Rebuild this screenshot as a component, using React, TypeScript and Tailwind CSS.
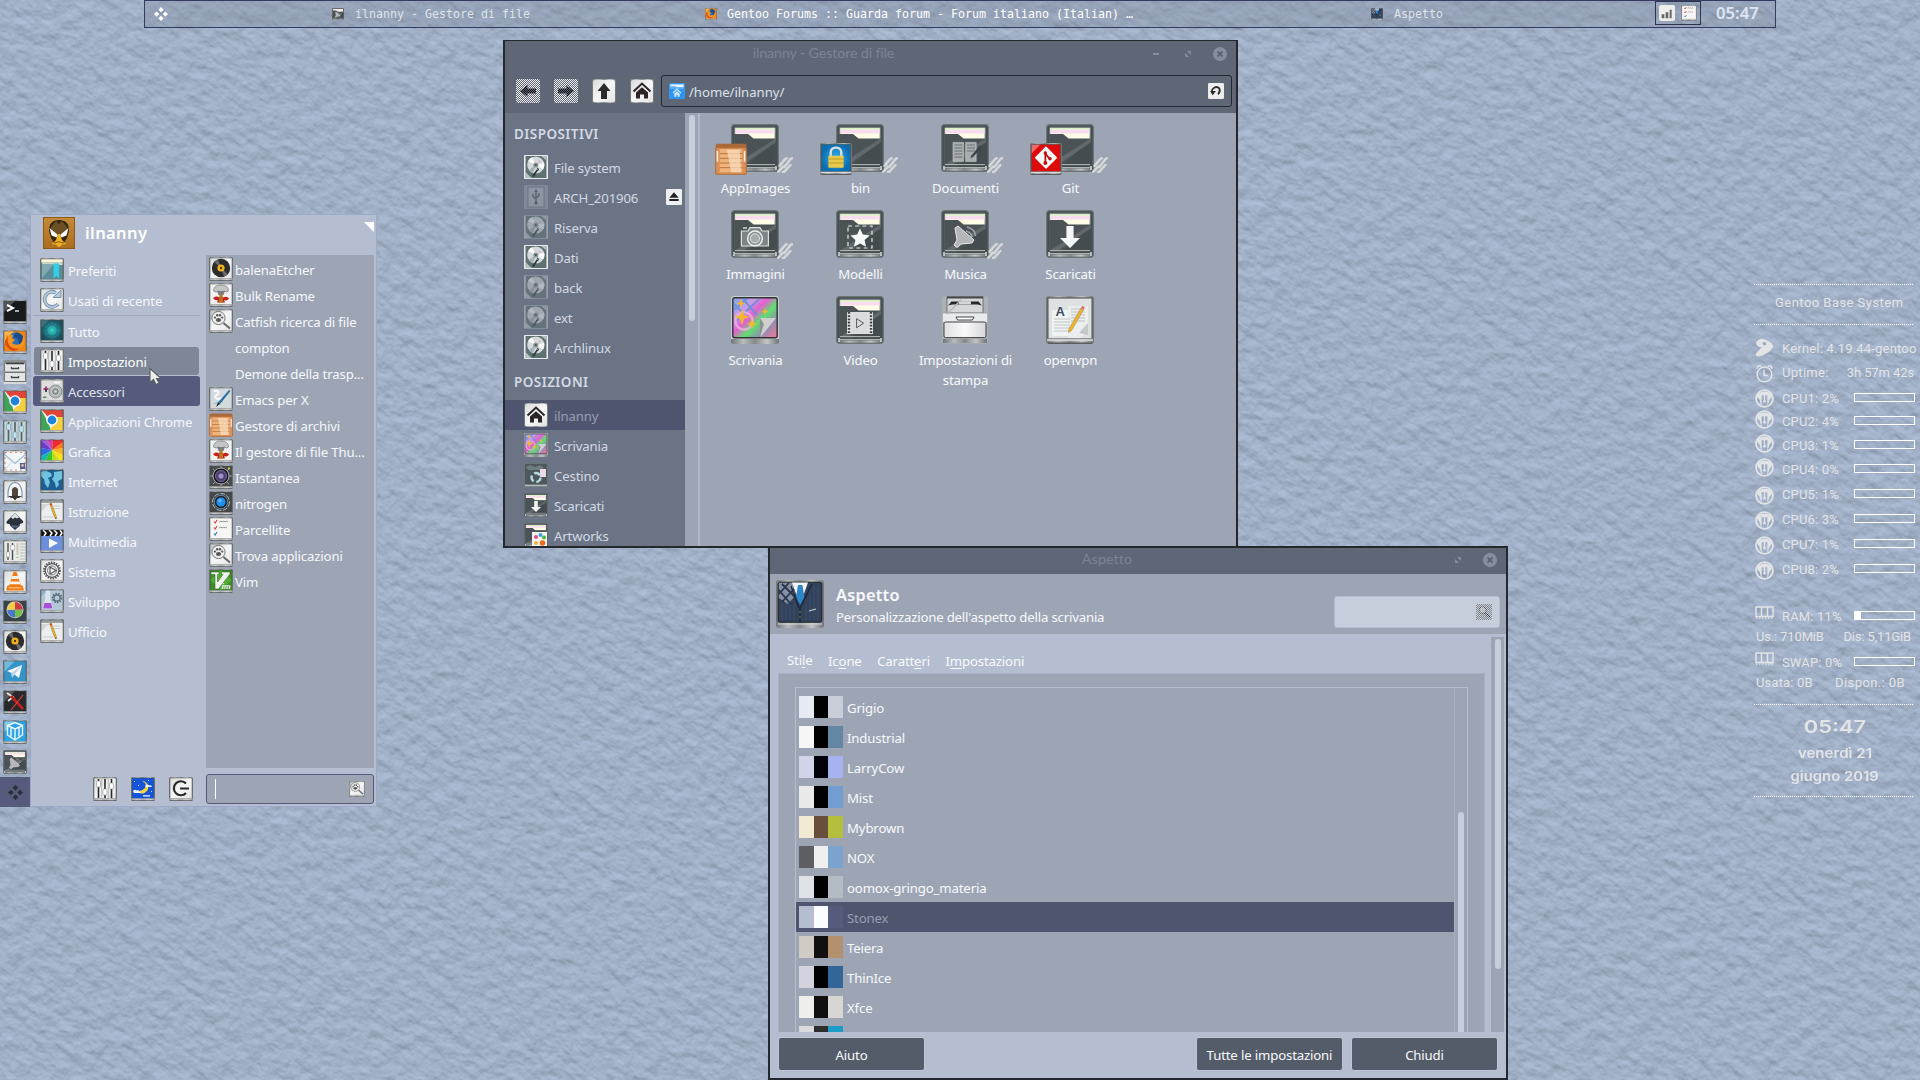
import React from "react";

/* ---------- icon drawings ---------- */

type Kids = { children?: React.ReactNode };

function Defs() {
  return (
    <svg width="0" height="0" className="absolute">
      <defs>
        <linearGradient id="metal" x1="0" y1="0" x2="1" y2="0">
          <stop offset="0" stopColor="#6f7476" />
          <stop offset="0.25" stopColor="#b9bcbd" />
          <stop offset="0.5" stopColor="#85898a" />
          <stop offset="0.75" stopColor="#c3c5c6" />
          <stop offset="1" stopColor="#6f7476" />
        </linearGradient>
        <linearGradient id="paper" x1="0" y1="0" x2="1" y2="1">
          <stop offset="0" stopColor="#d9dbdb" />
          <stop offset="0.5" stopColor="#f6f6f6" />
          <stop offset="1" stopColor="#e4e4e4" />
        </linearGradient>
        <linearGradient id="rainbow" x1="0" y1="0" x2="1" y2="0.9">
          <stop offset="0" stopColor="#7fa8e0" />
          <stop offset="0.28" stopColor="#c99be8" />
          <stop offset="0.45" stopColor="#e45fd0" />
          <stop offset="0.62" stopColor="#5fe070" />
          <stop offset="0.8" stopColor="#8f8fb0" />
          <stop offset="1" stopColor="#e878a0" />
        </linearGradient>
        <radialGradient id="teal">
          <stop offset="0" stopColor="#36e0d0" />
          <stop offset="0.5" stopColor="#1d7f88" />
          <stop offset="1" stopColor="#1f4e5c" />
        </radialGradient>
        <radialGradient id="lockBlue">
          <stop offset="0" stopColor="#35b3ee" />
          <stop offset="1" stopColor="#0a6db0" />
        </radialGradient>
        <linearGradient id="duck" x1="0" y1="0" x2="0" y2="1">
          <stop offset="0" stopColor="#c58a35" />
          <stop offset="1" stopColor="#a96f20" />
        </linearGradient>
        <linearGradient id="printer" x1="0" y1="0" x2="1" y2="0">
          <stop offset="0" stopColor="#e0e0e2" />
          <stop offset="0.5" stopColor="#fafafa" />
          <stop offset="1" stopColor="#d6d6da" />
        </linearGradient>
        <pattern id="ditherLight" width="2" height="2" patternUnits="userSpaceOnUse">
          <rect width="1" height="1" fill="#c6cddb" />
          <rect x="1" y="1" width="1" height="1" fill="#c6cddb" />
        </pattern>
        <pattern id="dither" width="2" height="2" patternUnits="userSpaceOnUse">
          <rect width="1" height="1" fill="#5f6777" />
          <rect x="1" y="1" width="1" height="1" fill="#5f6777" />
        </pattern>
      </defs>
    </svg>
  );
}

function Tile({ fill = "url(#paper)", children }: Kids & { fill?: string }) {
  return (
    <>
      <rect x="0" y="0" width="24" height="24" rx="1.5" fill="url(#metal)" />
      <rect x="1" y="1" width="22" height="20.5" fill={fill} />
      {children}
      <path d="M1 1h22v20.5H1z" fill="none" stroke="#4a4e50" strokeWidth="0.7" opacity="0.7" />
      <path d="M0.5 22h23" stroke="#e2e2e2" strokeWidth="0.8" />
      <path d="M1 23.6h22" stroke="#5a5d5f" strokeWidth="0.8" />
    </>
  );
}

function Sliders({ c = "#26292b", k = "#ffffff" }: { c?: string; k?: string }) {
  return (
    <>
      <path d="M5.5 2v19M12 2v19M18.5 2v19" stroke={c} strokeWidth="1.6" />
      <path d="M8.7 2v19M15.3 2v19" stroke={c} strokeWidth="0.5" opacity="0.6" />
      <rect x="3.5" y="4" width="4" height="6" rx="1" fill={k} stroke="#8c9294" strokeWidth="0.6" />
      <rect x="10" y="12" width="4" height="6" rx="1" fill={k} stroke="#8c9294" strokeWidth="0.6" />
      <rect x="16.5" y="6" width="4" height="6" rx="1" fill={k} stroke="#8c9294" strokeWidth="0.6" />
    </>
  );
}

function FolderShape() {
  return (
    <>
      <rect x="0.3" y="0.3" width="23.4" height="23.4" rx="1.6" fill="#464e51" stroke="#6b7476" strokeWidth="0.6" />
      <rect x="1.6" y="1.4" width="20.8" height="21" rx="0.8" fill="#7b8385" />
      <path d="M2.200 2h19.600v5.500H2.200z" fill="#fffde8" />
      <path d="M2.200 2h19.600v0.9H2.200z" fill="#d8f0c4" />
      <path d="M2.200 2.900h19.600v1.800H2.200z" fill="#fadcf0" />
      <path d="M1.6 5h6.900l2.800 2.300h11.100v14.400H1.6z" fill="#4b5356" />
      <path d="M22.400 7.300v14.200H7.500z" fill="#444c4f" />
      <path d="M22.400 7.300v2L6 20.400H1.8z" fill="#7b8284" opacity="0.5" />
      <path d="M2 20.300h20M2 21.800h20" stroke="#b6babb" strokeWidth="0.5" />
      <path d="M1.400 22.200h21.200v1.200H1.400z" fill="url(#metal)" />
      <path d="M1.500 21v2M22.500 21v2" stroke="#e4e6e6" strokeWidth="0.700" />
    </>
  );
}

function Vinyl() {
  return (
    <>
      <circle cx="12" cy="11" r="9.2" fill="#2c2c2e" />
      <path d="M12 11L5 4.800A9.200 9.200 0 0 1 9 2.400zM12 11l7 6.200a9.200 9.200 0 0 1-4 2.400z" fill="#6a6a6c" />
      <circle cx="12" cy="11" r="3.600" fill="#f3b51f" />
      <circle cx="12" cy="11" r="1.200" fill="#4a3a10" />
    </>
  );
}

function Disk({ dim }: { dim?: boolean }) {
  return (
    <g opacity={dim ? 0.5 : 1}>
      <rect width="24" height="24" rx="0.8" fill={dim ? "#9aa4b0" : "#e6eaea"} />
      <rect x="1" y="1" width="22" height="22" fill="#5f7273" />
      <path d="M2 1h20v4L17 1zM1.500 17l6 6h-6z" fill="#b6c1c1" />
      <circle cx="11.800" cy="10" r="8.600" fill="#d3d9dc" />
      <path d="M11.800 10L4 6a8.600 8.600 0 0 1 4-3.800zM11.800 10l8.400-2a9 9 0 0 1-1 6.500z" fill="#fbfbfb" />
      <path d="M11.800 10l-3 8.200a8.600 8.600 0 0 1-4-3z" fill="#a6afb5" />
      <circle cx="11.800" cy="10" r="2.600" fill="#8d989b" />
      <circle cx="11.800" cy="10" r="1" fill="#43494c" />
      <path d="M8 21l5-7 1 1L10 22z" fill="#303a3b" />
      <path d="M13 13l2 1.500-3 2" fill="none" stroke="#303a3b" strokeWidth="1" />
      <path d="M23 1v22M1 1v22" stroke="#f2f5f5" strokeWidth="1" />
      {!dim && <circle cx="15.500" cy="6.500" r="1" fill="#e4a0b4" />}
    </g>
  );
}

function HouseGlyph({ c = "#2b2526" }: { c?: string }) {
  return (
    <>
      <path d="M3.500 12.500L12 4.500l8.500 8" fill="none" stroke={c} strokeWidth="2" />
      <path d="M6 13.500l6-5.200 6 5.200v6h-4v-4h-4v4H6z" fill={c} />
    </>
  );
}

function Chrome() {
  return (
    <>
      <path d="M1 1l7 12 3 8.500H1z" fill="#3fa556" />
      <path d="M23 8v13.500H9.500L15.500 13 16 8z" fill="#f4cf3e" />
      <path d="M2 1h21v7H8z" fill="#e0453a" />
      <circle cx="12" cy="11" r="5.800" fill="#fff" />
      <circle cx="12" cy="11" r="4.400" fill="#1f83d8" />
    </>
  );
}

function Crate() {
  return (
    <>
      <rect x="0.500" y="0.500" width="23" height="4.500" rx="1" fill="#a9693a" />
      <rect x="0.500" y="3.500" width="23" height="20" rx="1" fill="#d98f55" stroke="#b46f38" strokeWidth="0.800" />
      <rect x="3.500" y="4.500" width="17" height="17.500" fill="#eeb27c" />
      <path d="M3.500 8h17M3.500 11.500h17M3.500 15h17M3.500 18.500h17" stroke="#b56f36" strokeWidth="0.700" />
      <path d="M9 5h9.500l1 17h-7.500z" fill="#fbe0c2" opacity="0.700" />
      <path d="M1.800 6v8M22.200 6v8" stroke="#f0ece6" strokeWidth="1.200" />
    </>
  );
}

function Catfish() {
  return (
    <>
      <path d="M1 1h11L1 12z" fill="#c8caca" />
      <circle cx="9.500" cy="9" r="6.600" fill="#ededed" stroke="#77797b" strokeWidth="1" />
      <path d="M14.500 14l6.500 5.500" stroke="#66686a" strokeWidth="2" />
      <ellipse cx="9.500" cy="11" rx="2.600" ry="2" fill="#55575a" />
      <circle cx="6" cy="8.600" r="1.100" fill="#55575a" />
      <circle cx="8.200" cy="6.200" r="1.200" fill="#55575a" />
      <circle cx="11" cy="6.200" r="1.200" fill="#55575a" />
      <circle cx="13.200" cy="8.600" r="1.100" fill="#55575a" />
    </>
  );
}

function Desktop() {
  return (
    <>
      <rect x="0" y="0" width="24" height="24" rx="1.500" fill="#c9cdd0" />
      <path d="M0 21.500h24v1.500q0 1-1 1H1q-1 0-1-1z" fill="url(#metal)" />
      <rect x="0.900" y="0.900" width="22.200" height="20" rx="1" fill="url(#rainbow)" stroke="#2d3134" strokeWidth="0.700" />
      <path d="M1.500 7L8 1.500M2 13L14 1.500M6 1.500l7 8M1.500 4l5 5" stroke="#5f92d8" strokeWidth="1" opacity="0.800" />
      <circle cx="6.500" cy="12.500" r="4.300" fill="none" stroke="#f3b7e6" strokeWidth="1.300" opacity="0.700" />
      <path d="M5.500 6.500l1 3 3 1-3 1-1 3-1-3-3-1 3-1zM5 1.500l.6 1.600 1.600.6-1.600.6L5 6l-.6-1.700-1.600-.6 1.600-.6zM10.500 11.500l.7 1.800 1.800.7-1.800.7-.7 1.800-.7-1.800-1.800-.7 1.800-.7zM17 6l.5 1.200 1.200.5-1.200.5L17 9.500l-.5-1.300-1.200-.5 1.200-.5z" fill="#f6b730" />
      <path d="M14.500 11h8l-7.700 9.500z" fill="#cdd0cf" />
      <path d="M14.500 11v9.500L16.500 14z" fill="#8e9391" />
    </>
  );
}

function Gear({ cx, cy, r, c = "#55595b" }: { cx: number; cy: number; r: number; c?: string }) {
  return (
    <>
      <circle cx={cx} cy={cy} r={r} fill="none" stroke={c} strokeWidth="2" strokeDasharray="1.400 1.200" />
      <circle cx={cx} cy={cy} r={r - 1.2} fill="none" stroke={c} strokeWidth="1.200" />
    </>
  );
}

function Mushroom() {
  return (
    <>
      <path d="M4.500 8q0-6 7.500-6t7.500 6q-2 2-4 0-3 2-6 0-2 2-5 0z" fill="#c3c6c7" stroke="#85888a" strokeWidth="0.800" />
      <path d="M8 8h8l-1.500 4h-5z" fill="#7b7f82" />
      <path d="M4 15q4-2.500 6-.5 2-2 4 0 4-2 6 1-2 3-5 1.500l1 2.500H8l1-2.500q-3 1-5-2z" fill="#c5201e" />
      <path d="M10.500 11.500h3l.7 8h-4.400z" fill="#b9741f" />
    </>
  );
}

function Pencil() {
  return (
    <>
      <rect x="1" y="1" width="22" height="3" fill="#9aa1a2" />
      <path d="M12.500 7h8M12.500 9.500h8M3 18h10" stroke="#b9bdbe" strokeWidth="0.700" />
      <path d="M1 13L9 5H1z" fill="#d3d6d6" />
      <path d="M9.700 4.800l1.600-.6 5 13.300v2.500l-1.700-1.800z" fill="#f0b52c" stroke="#8a6a1c" strokeWidth="0.500" />
      <path d="M9.700 4.800l1.600-.6.700 1.800-1.600.6z" fill="#d23c34" />
      <path d="M16.200 18.500v1.800l-1.200-1.200z" fill="#333" />
    </>
  );
}

function Glyph({ n }: { n: string }) {
  switch (n) {
    case "terminal":
      return (
        <Tile fill="#17191b">
          <path d="M1 12L12 1H1z" fill="#4f5557" />
          <path d="M4 5l6 3-6 3" fill="none" stroke="#fff" strokeWidth="2" />
          <path d="M12 11h4" stroke="#ddd" strokeWidth="1.500" />
        </Tile>
      );
    case "firefox":
      return (
        <Tile fill="#f08416">
          <path d="M1 1h10L5 8 1 14z" fill="#f9b24a" />
          <circle cx="12.500" cy="10" r="7.500" fill="#2c6db5" />
          <path d="M12 3q4-2 8 3 1 8-3 11l-2-8-4-2z" fill="#1a4b8c" />
          <path d="M3 5l3 1q2-2 4-1l-1 3 3 2-3 3q3 3 8 1 3-3 3-8 3 3 1 9-4 6-10 5-7-2-8-9z" fill="#f6941d" />
          <path d="M5 6q-2 7 3 11 5 3 9 1-4 4-9 2-6-3-6-9z" fill="#d64a10" />
        </Tile>
      );
    case "drawer":
      return (
        <>
          <rect x="0.500" y="0" width="23" height="24" rx="1" fill="#8b9092" />
          <rect x="1.500" y="3" width="21" height="9" rx="1" fill="#e3e5e5" stroke="#606668" strokeWidth="0.800" />
          <rect x="1.500" y="12.500" width="21" height="9" rx="1" fill="#e3e5e5" stroke="#606668" strokeWidth="0.800" />
          <path d="M3 3.500h18" stroke="#3c4042" strokeWidth="1.500" />
          <path d="M8.500 7v1.500h7V7M8.500 16v1.500h7V16" fill="none" stroke="#44494b" strokeWidth="1.300" />
          <rect x="0.500" y="22" width="23" height="2" fill="#d7d9d9" />
        </>
      );
    case "chrome":
      return <Tile><Chrome /></Tile>;
    case "mixer":
      return <Tile><Sliders /></Tile>;
    case "mixerBlue":
      return <Tile fill="#c3d5da"><Sliders c="#4f6067" k="#b9e3f2" /></Tile>;
    case "mail":
      return (
        <Tile fill="#f3f5f7">
          <path d="M2 2.500h20M2 20h20M2 2v18M22 2v18" stroke="#dc8a82" strokeWidth="1.200" strokeDasharray="2 3" />
          <path d="M1 20l8-8M23 20l-8-8" fill="none" stroke="#c9dbe6" strokeWidth="1" />
          <path d="M1 4l11 9.500L23 4" fill="none" stroke="#9cbdd0" strokeWidth="1.200" />
          <rect x="17" y="13" width="5" height="6" fill="#4c5fa0" />
          <circle cx="19.500" cy="15.500" r="1.400" fill="#e9b28e" />
        </Tile>
      );
    case "shell":
      return (
        <Tile>
          <path d="M5 18V12q1-9 7-9.500 6 .500 7 9.500v6" fill="#f7f7f7" stroke="#7c99b4" strokeWidth="1.200" />
          <path d="M9 9q3-4 6 0v8H9z" fill="#50473f" />
          <path d="M5 16h14l-3 2H8zM10 18l2 2.500 2-2.500z" fill="#38332f" />
        </Tile>
      );
    case "inkscape":
      return (
        <Tile>
          <path d="M12 3l8 8q1 2-2 2.500-2 .5-1 2l-5 4.500-5-4.500q1-1-1-1.500-4-.5-2-3z" fill="#2b313c" />
          <path d="M12 3l4 4.500-2 1-2-1-2 1.500-2-1.500z" fill="#d9e1ea" />
          <path d="M7 15.500h10l-2 2H9z" fill="#55657c" />
        </Tile>
      );
    case "alsa":
      return (
        <Tile fill="#e9ebe8">
          <path d="M5 3v17M9.500 3v17" stroke="#4a4e50" strokeWidth="1.400" />
          <rect x="3.300" y="12" width="3.400" height="5" fill="#fff" stroke="#888" strokeWidth="0.500" />
          <rect x="7.800" y="5" width="3.400" height="5" fill="#fff" stroke="#888" strokeWidth="0.500" />
          <path d="M13.500 4h2M13.500 8h2M13.500 12h2" stroke="#dc8a80" strokeWidth="1.200" />
          <path d="M13.500 6h2M13.500 10h2M13.500 14h2M13.500 17.500h2" stroke="#7fb488" strokeWidth="1.200" />
          <path d="M17 4h5M17 7h5M17 10h5M17 13h5M17 16h5M17 19h5" stroke="#b4b9b7" strokeWidth="1" />
        </Tile>
      );
    case "vlc":
      return (
        <Tile>
          <path d="M10.500 2h3l4.500 14H6z" fill="#f27c14" />
          <path d="M9.300 6h5.400l1 3H8.300zM7.500 11.500h9l.9 2.800H6.600z" fill="#f6f2ee" />
          <path d="M4.500 15.500h15l1.500 5H3z" fill="#ee7a12" />
          <path d="M6 17h12l.5 1.500h-13z" fill="#fbb266" />
        </Tile>
      );
    case "disk":
      return (
        <Tile fill="#364247">
          <circle cx="12" cy="9.800" r="8.500" fill="#cfd4d6" />
          <path d="M12 9.800V2a7.800 7.800 0 0 1 7.800 7.800z" fill="#d03a44" />
          <path d="M12 9.800h7.800A7.800 7.800 0 0 1 12 17.600z" fill="#72c04a" />
          <path d="M12 9.800v7.800a7.800 7.800 0 0 1-7.800-7.800z" fill="#4a76c8" />
          <path d="M12 9.800H4.200A7.800 7.800 0 0 1 12 2z" fill="#f0cf44" />
        </Tile>
      );
    case "vinyl":
      return <Tile><Vinyl /></Tile>;
    case "telegram":
      return (
        <Tile fill="#3494c8">
          <path d="M1 12L12 1H1z" fill="#74b8dc" />
          <path d="M4 11l15-6-3 13-4.500-3.500L9 17.500 8.500 13z" fill="#f7fafc" />
          <path d="M8.500 13L19 5l-7.500 9.500L9 17.500z" fill="#b8d4e6" />
        </Tile>
      );
    case "xterm":
      return (
        <Tile fill="#27292c">
          <path d="M1 12L12 1H1z" fill="#55595b" />
          <path d="M4 3l6 4-5 4" fill="none" stroke="#e6e6e6" strokeWidth="1.800" />
          <path d="M8 6l12 13" stroke="#c81e1e" strokeWidth="2.600" />
          <path d="M20 5L8 20" stroke="#e2483a" strokeWidth="1.100" />
        </Tile>
      );
    case "vbox":
      return (
        <Tile fill="#2ea3e4">
          <path d="M1 12L12 1H1z" fill="#7cc8f0" />
          <path d="M4.500 5.500L12 9l7.500-3.500V15L12 20l-7.500-5zM12 9v11M4.500 5.500L12 2.500l7.500 3M8 7.500v9M16 7.500v9" fill="none" stroke="#eef7fc" strokeWidth="1.400" />
        </Tile>
      );
    case "bookmark":
      return (
        <Tile fill="#5a8d97">
          <path d="M1 1h22v3.500H1z" fill="#fbf8d8" />
          <path d="M1 4.500h22V7H4z" fill="#cfd6c8" />
          <path d="M2 20L14 6H2z" fill="#82aab2" />
          <path d="M13.500 5.500h5.500v15l-2.700-2.500-2.800 2.500z" fill="#31d0e6" />
        </Tile>
      );
    case "recent":
      return (
        <Tile>
          <path d="M18 16A7.500 7.500 0 1 1 16 5" fill="none" stroke="#6f8aa6" strokeWidth="3.600" />
          <path d="M18 16A7.500 7.500 0 1 1 16 5" fill="none" stroke="#b3c8dc" strokeWidth="2" />
          <path d="M13 9.500h8V2z" fill="#b3c8dc" stroke="#6f8aa6" strokeWidth="0.900" />
        </Tile>
      );
    case "all":
      return (
        <Tile fill="url(#teal)">
          <circle cx="12" cy="11.500" r="4" fill="none" stroke="#3fb5b0" strokeWidth="0.600" />
          <circle cx="12" cy="11.500" r="7" fill="none" stroke="#3f9aa0" strokeWidth="0.500" strokeDasharray="2 1.500" />
          <path d="M1 9L9 1H1z" fill="#5f929c" opacity="0.500" />
        </Tile>
      );
    case "accessories":
      return (
        <Tile fill="#dcdddd">
          <path d="M3.500 10h5M6 7.500v5" stroke="#a83a86" strokeWidth="2" />
          <path d="M6 10v3" stroke="#33383a" strokeWidth="1.600" />
          <circle cx="15.500" cy="12.500" r="6.500" fill="#b4b9b9" stroke="#74797b" strokeWidth="0.700" />
          <circle cx="15.500" cy="12.500" r="3.800" fill="#81888a" stroke="#dfe2e2" strokeWidth="0.700" />
          <circle cx="15.500" cy="12.500" r="1.400" fill="#d0d4d4" />
          <rect x="3" y="17.500" width="3.500" height="1.600" fill="#5f8f64" />
          <rect x="14" y="2.500" width="6" height="2" fill="#f6f6f6" />
        </Tile>
      );
    case "graphics":
      return (
        <Tile fill="#ddd">
          <path d="M12 11L1 1h6z" fill="#a05fd0" />
          <path d="M12 11L7 1h6z" fill="#d040b0" />
          <path d="M12 11L13 1h10v2z" fill="#ee2a2a" />
          <path d="M12 11L23 3v6z" fill="#fa7a1c" />
          <path d="M12 11l11-2v7z" fill="#fbb21c" />
          <path d="M12 11l11 5v5.500h-4z" fill="#f8e01c" />
          <path d="M12 11l7 10.500h-7z" fill="#b8e01c" />
          <path d="M12 11v10.500H5z" fill="#38c424" />
          <path d="M12 11L5 21.500H1V17z" fill="#1cb8b0" />
          <path d="M12 11L1 17v-8z" fill="#2a6ae4" />
          <path d="M12 11L1 9V1z" fill="#6c3ac8" />
        </Tile>
      );
    case "internet":
      return (
        <Tile fill="#1d5f90">
          <path d="M1 3l5-1 5 2 1 3-4 2 2 4-2 6-3-4-1-5-3-3zM14 3l8-1v8l-4 2 1 4-3 3-1-5-3-4 2-3z" fill="#7fd6ee" opacity="0.850" />
          <path d="M1 8L8 1H1z" fill="#74a7c6" opacity="0.500" />
        </Tile>
      );
    case "pencil":
      return <Tile fill="#eceeed"><Pencil /></Tile>;
    case "multimedia":
      return (
        <Tile fill="#6c90dc">
          <rect x="1" y="1" width="22" height="6" fill="#121314" />
          <path d="M3 1l3 3-2 3M9 1l3 3-2 3M14 1l3 3-2 3M20 1l2 3-2 3" fill="none" stroke="#fff" strokeWidth="1.500" />
          <path d="M9 9.500l9 4.500-9 5z" fill="#fff" />
        </Tile>
      );
    case "system":
      return (
        <Tile>
          <Gear cx={12} cy={11.5} r={8} />
          <circle cx="12" cy="11.500" r="4.500" fill="none" stroke="#55595b" strokeWidth="0.800" />
          <path d="M10 8l6 3.500-6 3.500z" fill="none" stroke="#55595b" strokeWidth="1.200" />
        </Tile>
      );
    case "develop":
      return (
        <Tile fill="#b3c8d6">
          <path d="M1 8L8 1H1z" fill="#8fb0c6" />
          <path d="M6 2v8l-3 9.500h9.500L9.500 10V2z" fill="#d8e2ea" stroke="#eef3f6" strokeWidth="0.800" />
          <path d="M4.500 14h6.500l1.500 5.500H3z" fill="#a94fd6" />
          <Gear cx={17} cy={9} r={4.3} c="#556878" />
        </Tile>
      );
    case "moon":
      return (
        <Tile fill="#1554d8">
          <path d="M11 3.500q6 4 2.500 8-4 4-8 1.500 3 5 8 3 6-4 2.500-9.500Q14 4 11 3.500z" fill="#f8d63a" />
          <path d="M2 14.500q1-3 3.500-1 2-1 3 1 1.500 0 1 1.500H3zM14.500 8.500q1.500-2 3.500 0 2.500-1 3 1.500h-6.500zM12 18.200h7v1.200h-7z" fill="#eef4fd" />
          <path d="M3 4l1 1M7 8l1 1M17 3l1 1M20 14l1 1" stroke="#fff" strokeWidth="0.800" />
        </Tile>
      );
    case "power":
      return (
        <Tile>
          <path d="M17 6.500A7 7 0 1 0 17 16" fill="none" stroke="#26282a" strokeWidth="2.200" />
          <path d="M11 11.500h9" stroke="#26282a" strokeWidth="2" />
        </Tile>
      );
    case "bulk":
      return <Tile fill="#f1f1f1"><Mushroom /></Tile>;
    case "catfish":
      return <Tile><Catfish /></Tile>;
    case "emacs":
      return (
        <Tile fill="#d3dade">
          <path d="M5 4q6-1 4 3-4 2-2 4t7 0" fill="none" stroke="#f8f9fa" strokeWidth="2" />
          <path d="M5 17q8-4 9-2" fill="none" stroke="#a3b4c0" strokeWidth="1" />
          <path d="M20 3l1.500 1L11 17l-3 2 1-3.500z" fill="#2c6e9e" />
          <path d="M9 15.500l1.500 1.500-3.500 3z" fill="#222" />
        </Tile>
      );
    case "crate":
      return <Crate />;
    case "shutter":
      return (
        <Tile fill="#4a4b4d">
          <path d="M4 4l16 15M20 4L4 19M12 1v20M1 11h22" stroke="#9da0a2" strokeWidth="1" />
          <circle cx="12" cy="11" r="8" fill="#17171c" stroke="#c4c8ca" strokeWidth="0.800" />
          <circle cx="12" cy="11" r="5.500" fill="#4c3f70" stroke="#7a6aa4" strokeWidth="1" />
          <circle cx="12" cy="11" r="2.600" fill="#9a93c4" />
          <circle cx="20" cy="3.500" r="1" fill="#e8e23c" />
        </Tile>
      );
    case "nitrogen":
      return (
        <Tile fill="#44484b">
          <circle cx="12" cy="11" r="8.500" fill="none" stroke="#aeb4b8" strokeWidth="1" strokeDasharray="5 1.500" />
          <circle cx="12" cy="11" r="6.700" fill="#222628" stroke="#6d9cc0" strokeWidth="0.800" />
          <circle cx="12" cy="11" r="4.600" fill="#1f8ff0" />
          <circle cx="11" cy="9.500" r="1.800" fill="#62b8fa" />
        </Tile>
      );
    case "tasks":
      return (
        <Tile fill="#f6f5f3">
          <path d="M5 4.500l1.200 1.500L8 3M5 10.500l1.200 1.500L8 9" fill="none" stroke="#cc4a44" strokeWidth="1.200" />
          <path d="M5 16.500l1.200 1.500L8 15" fill="none" stroke="#2a82b4" strokeWidth="1.200" />
          <path d="M10 5l2-1 1 1 2-1 1 1 2-1 1 1M10 11l2-1 1 1 2-1 1 1 2-1" fill="none" stroke="#8a8f92" strokeWidth="0.900" />
        </Tile>
      );
    case "vim":
      return (
        <Tile fill="#3f8a2a">
          <path d="M12 1l11 10-11 10L1 11z" fill="#4fae32" />
          <path d="M2 3h8v2.500H8.500V13L14 5.500h-1.500V3H21v2L9.500 20H6V5.500H2z" fill="#f0f2ef" stroke="#2d5a22" strokeWidth="0.500" />
          <text x="12.500" y="20" fontSize="9" fontStyle="italic" fontWeight="700" fontFamily="Liberation Serif, serif" fill="#f0f2ef">im</text>
        </Tile>
      );
    case "hdd":
      return <Disk />;
    case "hddDim":
      return <Disk dim />;
    case "usbDim":
      return (
        <g opacity="0.600">
          <rect width="24" height="24" rx="1" fill="#8d98a4" />
          <rect x="4" y="2" width="16" height="20" fill="#a3adb8" stroke="#6b7684" />
          <path d="M12 5v13M12 14l-3-2.500V9M12 13l3-2.500V8" fill="none" stroke="#475260" strokeWidth="1.400" />
          <circle cx="12" cy="18" r="1.600" fill="#475260" />
          <path d="M10.300 7L12 4l1.700 3z" fill="#475260" />
        </g>
      );
    case "home":
      return <><rect width="24" height="24" rx="2" fill="url(#metal)" /><rect x="1" y="1" width="22" height="22" rx="1.500" fill="url(#paper)" /><HouseGlyph /></>;
    case "up":
      return <><rect width="24" height="24" rx="2" fill="url(#metal)" /><rect x="1" y="1" width="22" height="22" rx="1.500" fill="url(#paper)" /><path d="M12 4l6.500 8H15v8H9v-8H5.500z" fill="#2b2b2b" /></>;
    case "left":
      return <><rect width="24" height="24" rx="2" fill="#f0f0f0" /><path d="M4 12l7.500-6v3.500H20v5h-8.500V18z" fill="#0c0c0c" /><rect width="24" height="24" fill="url(#dither)" shapeRendering="crispEdges" /></>;
    case "right":
      return <><rect width="24" height="24" rx="2" fill="#f0f0f0" /><path d="M20 12l-7.500-6v3.500H4v5h8.500V18z" fill="#0c0c0c" /><rect width="24" height="24" fill="url(#dither)" shapeRendering="crispEdges" /></>;
    case "eject":
      return <><rect width="24" height="24" rx="2" fill="#eef0f0" /><path d="M12 5l7 8H5zM5 15h14v3H5z" fill="#222" /></>;
    case "reload":
      return <><rect width="24" height="24" rx="2" fill="#eceded" /><path d="M8 17q-4-6 0-9 5-4 9 0 2 5-2 9" fill="none" stroke="#2a2a2a" strokeWidth="2.600" /><path d="M3 12h9l-5 6z" fill="#2a2a2a" /></>;
    case "homeBlue":
      return <><rect width="24" height="24" rx="1.500" fill="#2f95f2" /><path d="M2 2h20v4.500H2z" fill="#e8f3fd" /><path d="M2 5h8l2 2h10v2H2z" fill="#5fb0f8" /><path d="M6 15l6-5.500 6 5.500" fill="none" stroke="#d6eafc" strokeWidth="1.600" /><path d="M8 16l4-3.500 4 3.500v4.500h-3v-3h-2v3H8z" fill="#d6eafc" /></>;
    case "searchDim":
      return <><rect width="24" height="24" fill="#85888c" /><circle cx="10" cy="9" r="5" fill="#b5b5b5" stroke="#555" strokeWidth="2" /><path d="M13 13l8 7" stroke="#444" strokeWidth="3" /></>;
    case "desktop":
      return <Desktop />;
    case "trash":
      return (
        <>
          <rect width="24" height="24" rx="1" fill="#6a7577" />
          <rect x="1" y="1" width="22" height="20.500" fill="#4c585b" />
          <path d="M2 4l4-2 5 2 5-2 4 3-4 2H4z" fill="#6f7c80" />
          <path d="M16 6h6v8h-6z" fill="#ecd9e8" />
          <circle cx="12" cy="14.500" r="4.500" fill="none" stroke="#b9dce2" strokeWidth="2.400" strokeDasharray="6.500 2.900" />
          <path d="M1 22.500h22" stroke="#b5babb" strokeWidth="1.500" />
        </>
      );
    case "artworks":
      return (
        <>
          <FolderShape />
          <rect x="8" y="9" width="15" height="15" fill="#f5f3f2" />
          <circle cx="12" cy="14" r="2" fill="#e0508e" /><circle cx="16.500" cy="12" r="2" fill="#3fa0e0" /><circle cx="20" cy="14.500" r="2" fill="#49b649" />
          <circle cx="12" cy="20" r="2" fill="#f0b53c" /><circle cx="18.500" cy="20" r="2.800" fill="#ee6a1c" />
        </>
      );
    case "suit":
      return (
        <>
          <rect width="24" height="24" rx="1.500" fill="url(#metal)" />
          <rect x="1.100" y="1.100" width="21.800" height="20" rx="1" fill="#31425a" stroke="#1f2326" strokeWidth="0.500" />
          <path d="M3 3v17M5 3v17M7 8v12M9 12v8M15 12v8M17 8v12M19 3v17M21 3v17" stroke="#46597a" strokeWidth="0.300" />
          <path d="M1.400 1.400H8.500L9.500 8 6 12 1.400 9z" fill="#98a3b4" opacity="0.800" />
          <path d="M1.400 7l5-5.500M3 11l6-6.500M3 2l7 7M1.400 5l6 7" stroke="#25344c" strokeWidth="0.900" />
          <path d="M8 1.200h8L12.500 11h-1z" fill="#f4f5f7" />
          <path d="M11 2.500h2.200l1 6-2.100 4-2.100-4z" fill="#2d86c8" />
          <path d="M11.500 14L7.500 3M12 14L18 2M12 14v7" fill="none" stroke="#1c2839" strokeWidth="0.700" />
          <path d="M16.500 15.500l3.500-1" stroke="#c8cdd4" strokeWidth="0.600" />
          <circle cx="12" cy="16" r="0.600" fill="#57513f" /><circle cx="12" cy="18.500" r="0.600" fill="#57513f" />
          <path d="M1 22h22" stroke="#d5d7d8" strokeWidth="0.600" />
        </>
      );
    case "stats":
      return <><rect width="24" height="24" rx="3" fill="#eeeeea" /><path d="M4 20v-6h4v6zM10 20v-9h4v9zM16 20V7h3v13z" fill="#66696c" /></>;
    case "folder":
      return <FolderShape />;
    case "documents":
      return (
        <><FolderShape />
          <path d="M6 9.200h5.300v9.500H6zM12.300 9.200h5.300v9.500h-5.300z" fill="#a9adaf" stroke="#c6caca" strokeWidth="0.300" />
          <path d="M6.700 10.500h4M6.700 12h4M6.700 13.500h4M6.700 15h4M6.700 16.500h4M13 10.500h4M13 12h4M13 13.500h4" stroke="#5c6467" strokeWidth="0.400" />
          <path d="M20.500 11.500l-4.500 5-1.300.8.500-1.500 4.300-5z" fill="#3c4346" /></>
      );
    case "pictures":
      return (
        <><FolderShape />
          <path d="M5.200 10.500h3.300l1-1.700h5l1 1.700h3.200v7.500H5.200z" fill="#7d8486" stroke="#dfe1e1" strokeWidth="0.600" />
          <circle cx="12" cy="14.200" r="3.700" fill="#8b9294" stroke="#f0f1f1" strokeWidth="0.700" />
          <circle cx="12" cy="14.200" r="2.300" fill="#a6abad" stroke="#f0f1f1" strokeWidth="0.400" />
          <path d="M6 9h2" stroke="#dfe1e1" strokeWidth="0.700" /></>
      );
    case "templates":
      return (
        <><FolderShape />
          <rect x="6" y="8" width="12" height="11" fill="none" stroke="#e8eaea" strokeWidth="0.600" strokeDasharray="2 1.600" />
          <path d="M12 9.200l1.400 3.100 3.400.4-2.500 2.300.7 3.400-3-1.700-3 1.700.7-3.400-2.500-2.300 3.400-.4z" fill="#f7f8f8" /></>
      );
    case "music":
      return (
        <><FolderShape />
          <path d="M7 9l1.500-1 8 7-1 1.500-5.500.5L8 18.800 6.500 17.500l1.500-2.500z" fill="#b3b7b9" stroke="#e8e9e9" strokeWidth="0.500" />
          <path d="M12.500 10.500q3 1 3 3M13 8.500q4 1 4.300 4.500" fill="none" stroke="#a2a7a9" strokeWidth="0.700" /></>
      );
    case "downloads":
      return <><FolderShape /><path d="M10.200 8h3.600v6H17l-5 5-5-5h3.200z" fill="#f5f6f6" /></>;
    case "video":
      return (
        <><FolderShape />
          <rect x="5.500" y="8" width="13" height="11" fill="#dfe1e2" />
          <path d="M6.500 8v11M17.500 8v11" stroke="#3c4447" strokeWidth="1.200" strokeDasharray="0.900 0.700" />
          <rect x="7.800" y="8.300" width="8.400" height="10.400" fill="#d9dcdd" />
          <path d="M10.300 11.300l3.500 2.300-3.500 2.300z" fill="none" stroke="#555c5f" strokeWidth="0.500" /></>
      );
    case "printer":
      return (
        <>
          <rect x="0.500" y="0.300" width="23" height="23.400" rx="0.800" fill="#aeb1b4" />
          <rect x="3" y="0.500" width="18" height="8" fill="#d4d6d8" stroke="#5a5e61" strokeWidth="0.400" />
          <path d="M3 0.300h18v1H3z" fill="#45494c" />
          <path d="M3.600 4.700l1.600-2h13.600l1.600 2-2-.5H5.600z" fill="#26292b" />
          <path d="M9 2.600h6v1.600H9z" fill="#d4d6d8" />
          <path d="M1 8.500h22V13H1z" fill="#e9eaeb" />
          <path d="M1 8.500h22" stroke="#9a9ea1" strokeWidth="0.400" />
          <path d="M7.500 10.500h9l-.8 1.500H8.300z" fill="#fff" stroke="#3e4244" strokeWidth="0.500" />
          <rect x="1.500" y="13" width="21" height="7.800" rx="0.800" fill="url(#printer)" stroke="#404447" strokeWidth="0.500" />
          <path d="M1 21.500h22v2H1z" fill="url(#metal)" />
          <path d="M3 9L10 2" stroke="#b5b8bb" strokeWidth="0.700" />
        </>
      );
    case "openvpn":
      return (
        <Tile fill="#dde1e1">
          <path d="M3 7h12v13H3z" fill="#f1f3f3" />
          <path d="M11 5h10v13l-4 3H11z" fill="#eceeee" />
          <path d="M4 11.500h8M4 13h8M4 14.500h8M4 16h8M4 17.500h8M12.500 6.500h7M12.500 8h7M12.500 9.500h7M12.500 11h7M12.500 12.500h7" stroke="#a8b3b6" strokeWidth="0.350" />
          <text x="4.800" y="10.200" fontSize="6.500" fontWeight="700" fontFamily="Liberation Sans, sans-serif" fill="#3c4c60">A</text>
          <path d="M17.500 6l1.300.7-6 10.600-1.500 1 .1-1.700z" fill="#f0b52c" stroke="#8a6a1c" strokeWidth="0.200" />
          <path d="M17.500 6l1.300.7.6-1.100-1.300-.7z" fill="#d86a7a" />
          <path d="M16.500 18.500l4.500-5v6z" fill="#c3c8c9" />
        </Tile>
      );
    case "lock":
      return (
        <Tile fill="url(#lockBlue)">
          <path d="M8 10V7.500q0-4 4-4t4 4V10" fill="none" stroke="#d8e0e4" strokeWidth="1.800" />
          <rect x="6.300" y="9.500" width="11.400" height="9" rx="0.500" fill="#e9c94c" />
          <path d="M6.300 12h11.400M6.300 15h11.400" stroke="#bd9b22" strokeWidth="0.800" />
        </Tile>
      );
    case "git":
      return (
        <Tile fill="#dc0a0a">
          <path d="M1 8L8 1H1z" fill="#ef6a6a" />
          <path d="M12 2.500l8.500 8.500-8.500 8.500L3.500 11z" fill="#f8f8f8" />
          <path d="M11.500 6.500v9M11.500 8l3 3.500" stroke="#c01010" strokeWidth="1.300" />
          <circle cx="11.500" cy="7.500" r="1.300" fill="#c01010" /><circle cx="11.500" cy="15" r="1.500" fill="#c01010" /><circle cx="15" cy="11.800" r="1.300" fill="#c01010" />
        </Tile>
      );
    case "link":
      return (
        <path d="M4 13L12 3.500q1-1.500 2.500-1.500M11 15L20 3.500q1-1.500 2.500-1.500M2 22l7-7.500M9 22.500q2 0 3-1.500l8-9" fill="none" stroke="#d6d7d8" strokeWidth="3.800" strokeLinecap="round" />
      );
    default:
      return null;
  }
}

const sizes: Record<number, string> = {
  12: "w-3 h-3",
  16: "w-4 h-4",
  24: "w-6 h-6",
  32: "w-8 h-8",
  48: "w-12 h-12",
};

function Icon({ n, s = 24 }: { n: string; s?: number }) {
  return (
    <svg viewBox="0 0 24 24" className={`${sizes[s]} block shrink-0 overflow-hidden`}>
      <Glyph n={n} />
    </svg>
  );
}

function Diamonds({ className, fill }: { className: string; fill: string }) {
  return (
    <svg viewBox="0 0 16 16" className={className} fill={fill}>
      <path d="M8 0l3 3-3 3-3-3zM8 10l3 3-3 3-3-3zM3 5l3 3-3 3-3-3zM13 5l3 3-3 3-3-3z" />
    </svg>
  );
}

/* ---------- wallpaper ---------- */

function Wallpaper() {
  return (
    <svg className="absolute inset-0" width="1920" height="1080" viewBox="0 0 1920 1080">
      <filter id="plaster" x="0" y="0" width="100%" height="100%" colorInterpolationFilters="sRGB">
        <feTurbulence type="fractalNoise" baseFrequency="0.065 0.095" numOctaves="5" seed="11" result="n" />
        <feDiffuseLighting in="n" surfaceScale="1.600" diffuseConstant="1" lightingColor="#bdcee7">
          <feDistantLight azimuth="225" elevation="58" />
        </feDiffuseLighting>
      </filter>
      <rect width="1920" height="1080" fill="#a4b4cd" />
      <g transform="rotate(38 960 540)" opacity="0.550">
        <rect x="-300" y="-600" width="2520" height="2280" filter="url(#plaster)" />
      </g>
    </svg>
  );
}

/* ---------- top panel ---------- */

function TopPanel() {
  return (
    <header className="absolute left-[144px] top-0 flex h-7 w-[1632px] items-center border border-[#353a60] bg-[#7b8698]/30 font-['DejaVu_Sans_Mono',monospace] text-[11.63px] tracking-normal text-[#dfe3ea]">
      <Diamonds className="ml-[9px] h-[14px] w-[14px] shrink-0" fill="#ffffff" />
      <div className="ml-[164px] flex w-[373px] items-center gap-[11px] whitespace-pre"><Icon n="music" s={12} />ilnanny - Gestore di file</div>
      <div className="flex w-[666px] items-center gap-[10px] whitespace-pre text-white"><Icon n="firefox" s={12} />Gentoo Forums :: Guarda forum - Forum italiano (Italian) …</div>
      <div className="flex w-[284px] items-center gap-[11px]"><Icon n="suit" s={12} />Aspetto</div>
      <div className="-mt-0.5 flex h-6 w-[46px] items-center justify-between border border-[#2c3450] px-[3px]"><Icon n="stats" s={16} /><Icon n="tasks" s={16} /></div>
      <div className="ml-[15px] mt-[-2px] font-['Noto_Sans',sans-serif] text-[16.700px] font-semibold text-[#dde5f5]">05:47</div>
    </header>
  );
}

/* ---------- dock ---------- */

const dock = ["terminal", "firefox", "drawer", "chrome", "mixerBlue", "mail", "shell", "inkscape", "alsa", "vlc", "disk", "vinyl", "telegram", "xterm", "vbox", "music"];

function Dock() {
  return (
    <nav className="absolute left-0 top-[300px] flex w-[30px] flex-col items-center gap-1.5">
      {dock.map((n) => <Icon key={n} n={n} />)}
      <div className="-mt-[3px] flex h-[30px] w-[30px] items-center justify-center bg-[#565b7e]">
        <Diamonds className="h-[15px] w-[15px]" fill="#2d2f38" />
      </div>
    </nav>
  );
}

/* ---------- whisker menu ---------- */

const categories: [string, string][] = [
  ["bookmark", "Preferiti"], ["recent", "Usati di recente"],
  ["all", "Tutto"], ["mixer", "Impostazioni"], ["accessories", "Accessori"], ["chrome", "Applicazioni Chrome"],
  ["graphics", "Grafica"], ["internet", "Internet"], ["pencil", "Istruzione"], ["multimedia", "Multimedia"],
  ["system", "Sistema"], ["develop", "Sviluppo"], ["pencil", "Ufficio"],
];

const apps: [string, string][] = [
  ["vinyl", "balenaEtcher"], ["bulk", "Bulk Rename"], ["catfish", "Catfish ricerca di file"], ["", "compton"],
  ["", "Demone della trasp..."], ["emacs", "Emacs per X"], ["crate", "Gestore di archivi"], ["bulk", "Il gestore di file Thu..."],
  ["shutter", "Istantanea"], ["nitrogen", "nitrogen"], ["tasks", "Parcellite"], ["catfish", "Trova applicazioni"], ["vim", "Vim"],
];

function Category({ icon, label }: { icon: string; label: string }) {
  const selected = label === "Accessori";
  const hovered = label === "Impostazioni";
  return (
    <li className={`flex h-[30px] w-[167px] items-center rounded-[3px] ${selected ? "bg-[#565b7e] text-[#dfe3ec]" : ""}`}>
      <div className={`flex items-center gap-[4px] rounded-[3px] ${hovered ? "-mt-px ml-px h-7 w-[165px] bg-[#7d8797] pl-[6px] text-white" : "w-full pl-[7px]"}`}>
        <Icon n={icon} />
        <span className="pt-0.5">{label}</span>
      </div>
    </li>
  );
}

function Menu() {
  return (
    <section className="absolute left-[30px] top-[214px] flex h-[593px] w-[347px] flex-col border border-[#9dabc6] bg-[#b5bed0] pl-0.5 pr-[2px]">
      <div className="flex h-10 items-center">
        <svg viewBox="0 0 32 32" className="ml-[10px] mt-[-4px] h-8 w-8">
          <rect width="32" height="32" fill="#8c5a18" />
          <rect x="1" y="1" width="30" height="30" fill="url(#duck)" />
          <path d="M6 14Q6 3 16 3t10 11l-2 7-3 5H11l-3-5z" fill="#33250f" />
          <path d="M8 10l5-6 3 3 3-3 5 6v5l-8 3-8-3z" fill="#6b5026" />
          <path d="M6.500 11l8.500 7-1.500 2.500-5-2zM25.500 11L17 18l1.500 2.500 5-2z" fill="#f8f8f8" />
          <path d="M15 17h2l2 6 4 4q-3 1-4 0-1 3-3 3t-3-3q-1 1-4 0l4-4z" fill="#f0b022" />
          <path d="M11 26q5-2.500 10 0" stroke="#8a5a10" fill="none" />
        </svg>
        <span className="ml-[10px] mt-[-4px] text-[16.500px] font-semibold tracking-[0.400px] text-white">ilnanny</span>
        <svg viewBox="0 0 10 10" className="mb-4 ml-auto h-[10px] w-[10px]"><path d="M0 0h10v10z" fill="#fff" /></svg>
      </div>
      <div className="flex h-[513px]">
        <ul className="flex w-[173px] flex-col">
          {categories.slice(0, 2).map(([i, l]) => <Category key={l} icon={i} label={l} />)}
          <li className="h-px w-[167px] shrink-0 bg-[#9da8bd]" />
          {categories.slice(2).map(([i, l]) => <Category key={l} icon={i} label={l} />)}
        </ul>
        <ul className="flex w-[168px] flex-col bg-[#9da5b5] pt-px">
          {apps.map(([i, l]) => (
            <li key={l} className="flex h-[26px] items-center gap-[2px] whitespace-nowrap pl-[3px]">
              {i ? <Icon n={i} /> : <span className="w-6" />}
              <span className="pt-0.5">{l}</span>
            </li>
          ))}
        </ul>
      </div>
      <div className="mt-[6px] flex items-center">
        <div className="flex w-[173px] gap-[14px] pl-[60px]">
          <Icon n="mixer" /><Icon n="moon" /><Icon n="power" />
        </div>
        <div className="flex h-[30px] w-[168px] items-center justify-between rounded-[3px] border border-[#565b7e] bg-[#9da5b5] pl-2 pr-2">
          <span className="h-5 w-px bg-white" />
          <Icon n="catfish" s={16} />
        </div>
      </div>
      <svg viewBox="0 0 14 18" className="absolute left-[118px] top-[152px] h-[19px] w-[14px]">
        <path d="M1 1v14l3.500-3 2.500 5 3-1.500L7.500 11H12z" fill="#eeeeee" stroke="#5a5d60" strokeWidth="1.100" />
      </svg>
    </section>
  );
}

/* ---------- file manager ---------- */

function CloseButton() {
  return (
    <svg viewBox="0 0 14 14" className="h-3.5 w-3.5">
      <circle cx="7" cy="7" r="7" fill="#858e9a" />
      <path d="M4.500 4.500l5 5M9.500 4.500l-5 5" stroke="#5b6373" strokeWidth="1.800" />
    </svg>
  );
}

function MaxButton() {
  return (
    <svg viewBox="0 0 6 6" className="h-1.5 w-1.5" fill="#858e9a"><path d="M2 0h4v4zM0 2v4h4z" /></svg>
  );
}

function PlaceRow({ icon, label, sel, eject }: { icon: string; label: string; sel?: boolean; eject?: boolean }) {
  return (
    <li className={`flex h-[30px] shrink-0 items-center gap-1.5 pl-[19px] ${sel ? "bg-[#4f556e] text-[#969eb3]" : ""}`}>
      <Icon n={icon} />
      <span className="pt-px">{label}</span>
      {eject && <span className="ml-auto mr-[3px]"><Icon n="eject" s={16} /></span>}
    </li>
  );
}

const files: { n: string; label: string; link?: boolean; badge?: string }[] = [
  { n: "folder", label: "AppImages", link: true, badge: "crate" },
  { n: "folder", label: "bin", link: true, badge: "lock" },
  { n: "documents", label: "Documenti", link: true },
  { n: "folder", label: "Git", link: true, badge: "git" },
  { n: "pictures", label: "Immagini", link: true },
  { n: "templates", label: "Modelli" },
  { n: "music", label: "Musica", link: true },
  { n: "downloads", label: "Scaricati" },
  { n: "desktop", label: "Scrivania" },
  { n: "video", label: "Video" },
  { n: "printer", label: "Impostazioni di stampa" },
  { n: "openvpn", label: "openvpn" },
];

function FileManager() {
  return (
    <section className="absolute left-[503px] top-[40px] flex h-[508px] w-[735px] flex-col border-2 border-t border-[#23272e] bg-[#5f6777]">
      <div className="flex h-[27px] items-center font-['Lato',sans-serif]">
        <span className="-mt-[3px] w-[637px] text-center text-[14.300px] text-[#7b8491]">ilnanny - Gestore di file</span>
        <span className="-mt-px ml-[11px] h-[2px] w-1.5 bg-[#858e9a]" />
        <span className="-mt-px ml-[26px]"><MaxButton /></span>
        <span className="-mt-px ml-[22px]"><CloseButton /></span>
      </div>
      <div className="flex h-[45px] items-center pl-[11px]">
        <div className="flex gap-[14px]"><Icon n="left" /><Icon n="right" /><Icon n="up" /><Icon n="home" /></div>
        <div className="ml-[7px] flex h-8 w-[571px] items-center rounded-[3px] border border-[#22282f] px-[7px] text-[#dce1ea]">
          <Icon n="homeBlue" s={16} />
          <span className="ml-1 pt-0.5 tracking-[-0.050px]">/home/ilnanny/</span>
          <span className="ml-auto"><Icon n="reload" s={16} /></span>
        </div>
      </div>
      <div className="flex min-h-0 flex-1">
        <aside className="w-[180px] overflow-hidden bg-[#6b7484] text-[#d3d9e4]">
          <h2 className="flex h-[39px] items-center pl-[9px] pt-[3px] text-[13.500px] font-semibold tracking-[0.450px]">DISPOSITIVI</h2>
          <ul className="flex flex-col">
            <PlaceRow icon="hdd" label="File system" />
            <PlaceRow icon="usbDim" label="ARCH_201906" eject />
            <PlaceRow icon="hddDim" label="Riserva" />
            <PlaceRow icon="hdd" label="Dati" />
            <PlaceRow icon="hddDim" label="back" />
            <PlaceRow icon="hddDim" label="ext" />
            <PlaceRow icon="hdd" label="Archlinux" />
          </ul>
          <h2 className="flex h-[38px] items-center pl-[9px] pt-[2px] text-[13.500px] font-semibold tracking-[0.450px]">POSIZIONI</h2>
          <ul className="flex flex-col">
            <PlaceRow icon="home" label="ilnanny" sel />
            <PlaceRow icon="desktop" label="Scrivania" />
            <PlaceRow icon="trash" label="Cestino" />
            <PlaceRow icon="downloads" label="Scaricati" />
            <PlaceRow icon="artworks" label="Artworks" />
          </ul>
        </aside>
        <div className="w-[13px] bg-[#9da5b5] pl-1 pt-[2px]"><div className="h-[206px] w-1.5 rounded-full bg-[#c7cedb]" /></div>
        <div className="w-0.5 bg-[#b0b9cb]" />
        <div className="grid flex-1 auto-rows-[86px] grid-cols-[repeat(4,105px)] bg-[#9da5b5] pl-[2px] pt-[11px] text-[#f8f9fc]">
          {files.map((f) => (
            <div key={f.label} className="flex flex-col items-center">
              <div className="relative shrink-0">
                <Icon n={f.n} s={48} />
                {f.badge && <span className="absolute -left-4 top-[19px]"><Icon n={f.badge} s={32} /></span>}
                {f.link && <span className="absolute -right-[14px] top-[33px]"><Icon n="link" s={16} /></span>}
              </div>
              <span className="mt-[6px] w-[98px] pl-[2px] text-center leading-5">{f.label}</span>
            </div>
          ))}
        </div>
      </div>
    </section>
  );
}

/* ---------- appearance settings ---------- */

const themes: [string, string, string, string][] = [
  ["Grigio", "bg-[#e6eaf3]", "bg-black", "bg-[#c9cdd7]"],
  ["Industrial", "bg-[#f6f6f6]", "bg-black", "bg-[#6587a6]"],
  ["LarryCow", "bg-[#d1d4e8]", "bg-[#02020a]", "bg-[#a7b3f0]"],
  ["Mist", "bg-[#e9e9e9]", "bg-black", "bg-[#719dd0]"],
  ["Mybrown", "bg-[#f2ead2]", "bg-[#684e3c]", "bg-[#b4bf3e]"],
  ["NOX", "bg-[#5c5e62]", "bg-[#efefef]", "bg-[#7ba3d0]"],
  ["oomox-gringo_materia", "bg-[#dee2e7]", "bg-black", "bg-[#b3bbc4]"],
  ["Stonex", "bg-[#b5bed0]", "bg-[#fbfcff]", "bg-[#565b7e]"],
  ["Teiera", "bg-[#d0cbc4]", "bg-[#101010]", "bg-[#b3906e]"],
  ["ThinIce", "bg-[#d2d3de]", "bg-black", "bg-[#326698]"],
  ["Xfce", "bg-[#eeeeed]", "bg-[#101010]", "bg-[#d8d6d3]"],
  ["", "bg-[#d8dadb]", "bg-[#2d2d2d]", "bg-[#1d9cc8]"],
];

function PushButton({ children }: Kids) {
  return (
    <button className="h-[34px] w-[147px] rounded-[3px] border border-[#bdc6d6] bg-[#555c69] pt-0.5 text-center text-[#f8f9fc]">{children}</button>
  );
}

function Appearance() {
  return (
    <section className="absolute left-[768px] top-[546px] flex h-[534px] w-[740px] flex-col border-2 border-[#23272e] bg-[#b5bed0] text-[#f8f9fc]">
      <div className="flex h-[26px] shrink-0 items-center bg-[#5f6777] font-['Lato',sans-serif]">
        <span className="-mt-[4px] w-[674px] text-center text-[14.300px] tracking-[0.080px] text-[#7b8491]">Aspetto</span>
        <span className="-mt-[2px] ml-[11px]"><MaxButton /></span>
        <span className="-mt-[2px] ml-[22px]"><CloseButton /></span>
      </div>
      <div className="flex h-[60px] shrink-0 items-center bg-[#9da5b5] pl-1.5">
        <Icon n="suit" s={48} />
        <div className="ml-3 pt-[3px]">
          <h1 className="text-[16.300px] font-semibold leading-[22px] tracking-[0.250px]">Aspetto</h1>
          <p className="leading-[22px] tracking-[-0.180px]">Personalizzazione dell'aspetto della scrivania</p>
        </div>
        <div className="ml-auto mr-1.5 mt-[16px] flex h-8 w-[166px] items-center justify-end rounded-[3px] border border-[#b5bed0] bg-[#c6cddb] pr-[7px]">
          <div className="relative">
            <Icon n="searchDim" s={16} />
            <svg className="absolute inset-0 h-4 w-4"><rect width="16" height="16" fill="url(#ditherLight)" shapeRendering="crispEdges" /></svg>
          </div>
        </div>
      </div>
      <div className="flex h-[398px] shrink-0">
        <div className="ml-2 flex w-[707px] flex-col">
          <nav className="flex h-[39px] shrink-0 items-end gap-[15.500px] pb-[3px] pl-[9px]">
            <span className="pb-px">Sti<u className="underline-offset-2">l</u>e</span>
            <span>Ic<u className="underline-offset-2">o</u>ne</span>
            <span>Caratt<u className="underline-offset-2">e</u>ri</span>
            <span>I<u className="underline-offset-2">m</u>postazioni</span>
          </nav>
          <div className="flex min-h-0 flex-1 border-x border-t border-[#a8b1c3] bg-[#9da5b5] pl-4 pt-[13px]">
            <div className="flex w-[673px] overflow-hidden border border-b-0 border-[#b5bed0]">
              <ul className="w-[658px] shrink-0 overflow-hidden pt-1">
                {themes.map(([l, a, b, c]) => (
                  <li key={l} className={`flex h-[30px] items-center pl-[3px] ${l === "Stonex" ? "bg-[#4f556e] text-[#969eb3]" : ""}`}>
                    <span className={`h-[22px] w-[15px] ${a}`} />
                    <span className={`h-[22px] w-[14px] ${b}`} />
                    <span className={`h-[22px] w-[15px] ${c}`} />
                    <span className="ml-[4px] pt-px">{l}</span>
                  </li>
                ))}
              </ul>
              <div className="flex-1 border-l border-[#a8b1c3] pl-[3px] pt-[124px]"><div className="h-full w-1.5 rounded-t-full bg-[#c7cedb]" /></div>
            </div>
          </div>
        </div>
        <div className="ml-1.5 mt-[3px] w-[13px] bg-[#9da5b5] pl-1 pt-[2px]"><div className="h-[330px] w-1.5 rounded-full bg-[#c7cedb]" /></div>
      </div>
      <div className="flex flex-1 items-start gap-2 pl-2 pr-[8px] pt-[5px]">
        <PushButton>Aiuto</PushButton>
        <div className="ml-auto flex gap-2"><PushButton>Tutte le impostazioni</PushButton><PushButton>Chiudi</PushButton></div>
      </div>
    </section>
  );
}

/* ---------- system monitor ---------- */

function Dots({ className = "" }: { className?: string }) {
  return <div className={`h-px w-[159px] shrink-0 bg-[repeating-linear-gradient(90deg,#ffffff_0_1px,transparent_1px_2px)] ${className}`} />;
}

function Meter({ fill }: { fill: number }) {
  return (
    <div className="relative -top-[2px] ml-auto mr-[5px] h-[9px] w-[61px] border border-white">
      <div className="h-full bg-white" style={{ width: fill }} />
    </div>
  );
}

function CpuIcon() {
  return (
    <svg viewBox="0 0 20 20" className="h-[19px] w-[19px]" fill="#e2e4e6">
      <circle cx="10" cy="10" r="8.900" fill="none" stroke="#e2e4e6" strokeWidth="1.900" />
      <path d="M2 8q1-5 8-5.500Q17 3 18 8l-3 3.500-1.500 6-.5-.5V6.500H7V17l-.5.5-1.500-6z" />
      <path d="M9.300 5h1.400v7.500H9.300z" />
      <circle cx="10" cy="13" r="1.400" />
    </svg>
  );
}

function RamIcon() {
  return (
    <svg viewBox="0 0 19 14" className="h-[14px] w-[19px]" fill="none" stroke="#e2e4e6">
      <path d="M1 1h17v9.500H1zM6.500 1v9.500M12.500 1v9.500" strokeWidth="1.500" />
      <path d="M1 12h17" strokeWidth="1.500" strokeDasharray="1.500 1.500" />
    </svg>
  );
}

const cpus = [
  { p: "2%", m: "mt-1.5", o: "-top-px" },
  { p: "4%", m: "mt-[3px]", o: "-top-[3px]" },
  { p: "1%", m: "mt-1", o: "-top-[3px]" },
  { p: "0%", m: "mt-1", o: "-top-[3px]" },
  { p: "1%", m: "mt-[5px]", o: "top-0" },
  { p: "3%", m: "mt-[5px]", o: "top-0" },
  { p: "1%", m: "mt-[5px]", o: "top-0" },
  { p: "2%", m: "mt-[5px]", o: "top-0" },
];

function Conky() {
  return (
    <section className="absolute left-[1754px] top-[284px] flex w-[166px] flex-col whitespace-pre font-['Roboto',sans-serif] text-[13px] tracking-[0.150px] text-[#e2e4e6]">
      <Dots />
      <div className="flex h-[39px] items-center pl-[21px] tracking-[0.460px]"><span className="-mt-1">Gentoo Base System</span></div>
      <Dots />
      <div className="mt-[14px] flex h-5 items-center">
        <svg viewBox="0 0 20 20" className="-mt-1 ml-px h-[19px] w-[19px]" fill="#e2e4e6">
          <path fillRule="evenodd" d="M1 5Q4 0 9 1q9 3 10.500 8Q16 16 4 19.500q-4 0-3-3.500L7 10Q1 9 1 5zM8.500 4.500q-1.500 1 0 2.500 2 1 3 0 1-1.500-.5-2.500-1.500-.7-2.500 0z" />
        </svg>
        <span className="ml-2 tracking-[0.200px]">Kernel: 4.19.44-gentoo</span>
      </div>
      <div className="mt-1 flex h-5 items-center">
        <svg viewBox="0 0 20 20" className="ml-px h-[19px] w-[19px]" fill="none" stroke="#e2e4e6" strokeWidth="1.600">
          <circle cx="10" cy="11" r="7.800" /><path d="M9.500 6v6h4M2 5q1-4 4.500-3M18 5q-1-4-4.500-3" />
        </svg>
        <span className="ml-2 tracking-[0.300px]">Uptime:</span>
        <span className="ml-auto mr-[6px] tracking-[-0.100px]">3h 57m 42s</span>
      </div>
      {cpus.map((c, i) => (
        <div key={i} className={`flex h-5 items-center ${c.m}`}>
          <span className={`relative ml-px ${c.o}`}><CpuIcon /></span>
          <span className="ml-2">{`CPU${i + 1}: ${c.p}`}</span>
          <Meter fill={0} />
        </div>
      ))}
      <div className="mt-[27px] flex h-5 items-center">
        <span className="-mt-[8px] ml-px"><RamIcon /></span><span className="ml-2">RAM: 11%</span><Meter fill={6} />
      </div>
      <div className="flex h-5 items-center justify-between pl-[2px] pr-[9px] tracking-[-0.150px]"><span>Us.: 710MiB</span><span>Dis: 5,11GiB</span></div>
      <div className="mt-1.5 flex h-5 items-center">
        <span className="-mt-[8px] ml-px"><RamIcon /></span><span className="ml-2">SWAP: 0%</span><Meter fill={0} />
      </div>
      <div className="flex h-5 items-center justify-between pl-[2px] pr-[15px]"><span>Usata: 0B</span><span className="tracking-[0.400px]">Dispon.: 0B</span></div>
      <Dots className="mt-[11px]" />
      <div className="flex w-[162px] flex-col items-center font-['Inter',sans-serif] tracking-normal">
        <div className="mt-[12px] flex h-5 scale-x-[1.250] items-center text-[17.500px] font-semibold">05:47</div>
        <div className="mt-1.5 flex h-5 scale-x-[1.160] items-center text-[13px] font-semibold">venerdì 21</div>
        <div className="mt-[3px] flex h-5 scale-x-[1.140] items-center text-[13px] font-semibold">giugno 2019</div>
      </div>
      <Dots className="mt-[10px]" />
    </section>
  );
}

export default function App() {
  return (
    <main className="relative h-[1080px] w-[1920px] overflow-hidden bg-[#a3b4ce] font-['Noto_Sans',sans-serif] text-[13.200px] leading-[18px] tracking-[-0.150px] text-[#f5f7fb]">
      <Defs />
      <Wallpaper />
      <TopPanel />
      <Conky />
      <Dock />
      <Menu />
      <FileManager />
      <Appearance />
    </main>
  );
}
